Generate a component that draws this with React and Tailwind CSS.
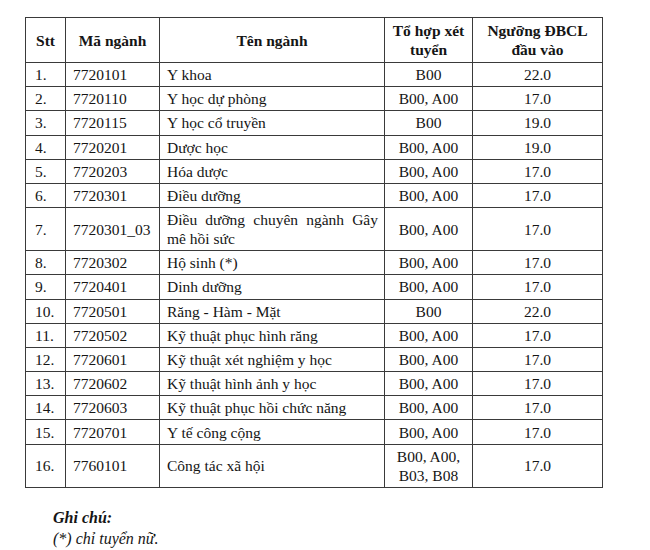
const rows = [
  ["1.", "7720101", "Y khoa", "B00", "22.0"],
  ["2.", "7720110", "Y học dự phòng", "B00, A00", "17.0"],
  ["3.", "7720115", "Y học cổ truyền", "B00", "19.0"],
  ["4.", "7720201", "Dược học", "B00, A00", "19.0"],
  ["5.", "7720203", "Hóa dược", "B00, A00", "17.0"],
  ["6.", "7720301", "Điều dưỡng", "B00, A00", "17.0"],
  ["7.", "7720301_03", "Điều dưỡng chuyên ngành Gây mê hồi sức", "B00, A00", "17.0"],
  ["8.", "7720302", "Hộ sinh (*)", "B00, A00", "17.0"],
  ["9.", "7720401", "Dinh dưỡng", "B00, A00", "17.0"],
  ["10.", "7720501", "Răng - Hàm - Mặt", "B00", "22.0"],
  ["11.", "7720502", "Kỹ thuật phục hình răng", "B00, A00", "17.0"],
  ["12.", "7720601", "Kỹ thuật xét nghiệm y học", "B00, A00", "17.0"],
  ["13.", "7720602", "Kỹ thuật hình ảnh y học", "B00, A00", "17.0"],
  ["14.", "7720603", "Kỹ thuật phục hồi chức năng", "B00, A00", "17.0"],
  ["15.", "7720701", "Y tế công cộng", "B00, A00", "17.0"],
  ["16.", "7760101", "Công tác xã hội", "B00, A00, B03, B08", "17.0"],
];

const cell = "font-[Liberation_Serif] border border-[#3a3a3a] align-middle py-[2px]";

export default function App() {
  return (
    <div className="font-[Liberation_Serif] w-[650px] h-[550px] bg-white pt-[17px] pl-[25px] text-[#151515] text-[15.5px] leading-[19px]">
      <table className="font-[Liberation_Serif] table-fixed border-collapse w-[577px]">
        <colgroup>
          <col className="w-[40px]" />
          <col className="w-[94px]" />
          <col className="w-[225px]" />
          <col className="w-[88px]" />
          <col className="w-[130px]" />
        </colgroup>
        <thead>
          <tr className="h-[45px] font-bold text-center">
            <th className={cell}>Stt</th>
            <th className={cell}>Mã ngành</th>
            <th className={cell}>Tên ngành</th>
            <th className={cell}>Tổ hợp xét<br />tuyển</th>
            <th className={cell}>Ngưỡng ĐBCL<br />đầu vào</th>
          </tr>
        </thead>
        <tbody>
          {rows.map((r, i) => (
            <tr key={i} className="h-[24.2px]">
              <td className={`${cell} pl-[9px]`}>{r[0]}</td>
              <td className={`${cell} pl-[7px]`}>{r[1]}</td>
              <td className={`${cell} pl-[7px] pr-[6px] text-justify`}>{r[2]}</td>
              <td className={`${cell} text-center px-[4px]`}>
                {r[3] === "B00, A00, B03, B08" ? (
                  <>B00, A00,<br />B03, B08</>
                ) : (
                  r[3]
                )}
              </td>
              <td className={`${cell} text-center`}>{r[4]}</td>
            </tr>
          ))}
        </tbody>
      </table>

      {/* Ghi chu */}
      <div className="font-[Liberation_Serif] mt-[19px] ml-[28px] italic leading-[21px] text-[16px]">
        <p className="font-bold">Ghi chú:</p>
        <p>(*) chỉ tuyển nữ.</p>
      </div>
    </div>
  );
}
